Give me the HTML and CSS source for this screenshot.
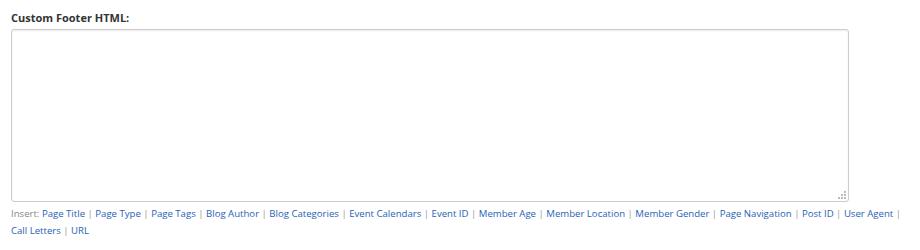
FILE: index.html
```html
<!DOCTYPE html>
<html lang="en">

<head>
  <meta charset="UTF-8">
  <title>Custom Footer</title>
  <link rel="stylesheet" href="styles.css">
</head>

<body>
  <div class="field">
    <label class="field-label" for="footer-html">Custom Footer HTML:</label>
    <div class="input-wrap">
      <textarea class="field-input" id="footer-html"></textarea>
      <span class="grip"></span>
    </div>
    <div class="insert">
      Insert:
      <a href="#">Page Title</a> <span class="sep">|</span>
      <a href="#">Page Type</a> <span class="sep">|</span>
      <a href="#">Page Tags</a> <span class="sep">|</span>
      <a href="#">Blog Author</a> <span class="sep">|</span>
      <a href="#">Blog Categories</a> <span class="sep">|</span>
      <a href="#">Event Calendars</a> <span class="sep">|</span>
      <a href="#">Event ID</a> <span class="sep">|</span>
      <a href="#">Member Age</a> <span class="sep">|</span>
      <a href="#">Member Location</a> <span class="sep">|</span>
      <a href="#">Member Gender</a> <span class="sep">|</span>
      <a href="#">Page Navigation</a> <span class="sep">|</span>
      <a href="#">Post ID</a> <span class="sep">|</span>
      <a href="#">User Agent</a> <span class="sep">|</span>
      <a href="#">Call Letters</a> <span class="sep">|</span>
      <a href="#">URL</a>
    </div>
  </div>
</body>

</html>
```

FILE: styles.css
```css
body {
  font-family: "Open Sans", Arial, sans-serif;
  background-color: white;
  color: #333;
  margin: 0;
  padding: 0;
}

.field {
  padding: 10px 11px 0;
}

.field-label {
  display: block;
  font-size: 11px;
  font-weight: bold;
  line-height: 16px;
  color: #333;
  margin-bottom: 3px;
}

.input-wrap {
  position: relative;
  width: 838px;
}

.field-input {
  display: block;
  box-sizing: border-box;
  width: 838px;
  height: 173px;
  margin: 0;
  padding: 4px 6px;
  border: 1px solid #ccc;
  border-radius: 3px;
  box-shadow: inset 0 1px 2px rgba(0, 0, 0, 0.08);
  font-family: inherit;
  font-size: 12px;
  resize: none;
}

/* little dotted resize corner */
.grip {
  position: absolute;
  right: 3px;
  bottom: 3px;
  width: 8px;
  height: 8px;
  background:
    linear-gradient(#bbb, #bbb) 6px 0 / 2px 2px no-repeat,
    linear-gradient(#bbb, #bbb) 3px 3px / 2px 2px no-repeat,
    linear-gradient(#bbb, #bbb) 6px 3px / 2px 2px no-repeat,
    linear-gradient(#bbb, #bbb) 0 6px / 2px 2px no-repeat,
    linear-gradient(#bbb, #bbb) 3px 6px / 2px 2px no-repeat,
    linear-gradient(#bbb, #bbb) 6px 6px / 2px 2px no-repeat;
}

.insert {
  margin-top: 3px;
  font-size: 9.6px;
  line-height: 17px;
  color: #888;
}

.insert a {
  color: #1f63b5;
  text-decoration: none;
}

.insert a:hover {
  text-decoration: underline;
}

.sep {
  color: #999;
}
```
